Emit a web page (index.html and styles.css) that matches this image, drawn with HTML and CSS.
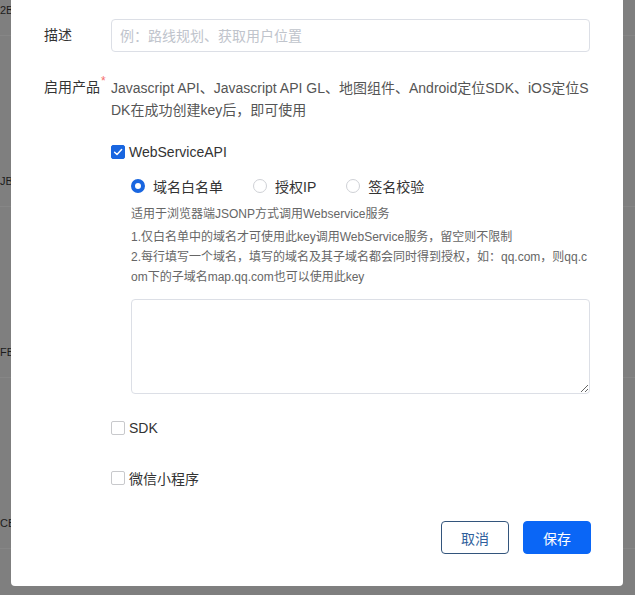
FILE: index.html
```html
<!DOCTYPE html>
<html lang="zh-CN">
<head>
<meta charset="utf-8">
<title>创建Key</title>
<link rel="stylesheet" href="styles.css">
</head>
<body>
<div class="backdrop">
  <div class="bg-row"><div class="bg-cell">2B</div><div class="bg-line"></div></div>
  <div class="bg-row"><div class="bg-cell">JB</div><div class="bg-line"></div></div>
  <div class="bg-row"><div class="bg-cell">FB</div><div class="bg-line"></div></div>
  <div class="bg-row"><div class="bg-cell">CB</div><div class="bg-line"></div></div>
</div>

<div class="modal">
  <div class="form">
    <div class="form-item item-desc">
      <label class="label">描述</label>
      <div class="control">
        <input class="input" type="text" placeholder="例：路线规划、获取用户位置">
      </div>
    </div>

    <div class="form-item item-products">
      <div class="label">启用产品<span class="req">*</span></div>
      <div class="control">
        <p class="intro">Javascript API、Javascript API GL、地图组件、Android定位SDK、iOS定位SDK在成功创建key后，即可使用</p>

        <div class="product">
          <label class="check">
            <span class="box checked">
              <svg viewBox="0 0 14 14" width="14" height="14"><path d="M3.6 7.2 L6 9.5 L10.6 4.6" fill="none" stroke="#fff" stroke-width="1.5" stroke-linecap="round" stroke-linejoin="round"/></svg>
            </span>
            <span class="check-text">WebServiceAPI</span>
          </label>
          <div class="sub">
            <div class="radios">
              <label class="radio"><span class="dot on"></span><span>域名白名单</span></label>
              <label class="radio"><span class="dot"></span><span>授权IP</span></label>
              <label class="radio"><span class="dot"></span><span>签名校验</span></label>
            </div>
            <div class="help">
              <p class="help-first">适用于浏览器端JSONP方式调用Webservice服务</p>
              <p>1.仅白名单中的域名才可使用此key调用WebService服务，留空则不限制</p>
              <p>2.每行填写一个域名，填写的域名及其子域名都会同时得到授权，如：qq.com，则qq.com下的子域名map.qq.com也可以使用此key</p>
            </div>
            <textarea class="textarea"></textarea>
          </div>
        </div>

        <div class="product product-sdk">
          <label class="check"><span class="box"></span><span class="check-text">SDK</span></label>
        </div>

        <div class="product product-mini">
          <label class="check"><span class="box"></span><span class="check-text">微信小程序</span></label>
        </div>
      </div>
    </div>
  </div>

  <div class="footer">
    <button class="btn btn-cancel" type="button">取消</button>
    <button class="btn btn-primary" type="button">保存</button>
  </div>
</div>
</body>
</html>
```

FILE: styles.css
```css
* { box-sizing: border-box; }

html, body {
  margin: 0;
  padding: 0;
  width: 635px;
  height: 595px;
  overflow: hidden;
}

body {
  position: relative;
  background: #7f7f7f;
  font-family: "Liberation Sans", "Noto Sans CJK SC", sans-serif;
  color: #333;
}

/* dimmed page behind the dialog */
.backdrop {
  height: 595px;
  overflow: hidden;
  display: flex;
  flex-direction: column;
}

.bg-row {
  height: 171px;
  flex: none;
}

.bg-cell {
  height: 20px;
  line-height: 20px;
  font-size: 11px;
  color: #1c1c1c;
  white-space: nowrap;
}

.bg-line {
  margin-top: 15px;
  height: 1px;
  background: #868686;
}

/* dialog */
.modal {
  position: absolute;
  left: 11px;
  top: 0;
  width: 612px;
  height: 586px;
  background: #fff;
  border-radius: 0 0 4px 4px;
  padding: 19px 33px 0 33px;
  display: flex;
  flex-direction: column;
}

.form-item {
  display: flex;
  align-items: flex-start;
}

.label {
  width: 67px;
  flex: none;
  font-size: 14px;
  color: #333;
}

.control {
  flex: 1;
  min-width: 0;
}

.item-desc .label {
  line-height: 33px;
}

.input {
  display: block;
  width: 100%;
  height: 33px;
  border: 1px solid #dcdfe6;
  border-radius: 4px;
  padding: 0 8px;
  font-family: inherit;
  font-size: 14px;
  color: #333;
  outline: none;
}

.input::placeholder {
  color: #c0c4cc;
}

.item-products {
  margin-top: 25px;
}

.item-products .label {
  line-height: 20px;
}

.req {
  color: #f56c6c;
  font-size: 12px;
  vertical-align: top;
  position: relative;
  top: -6px;
  margin-left: 1px;
}

.intro {
  margin: 0 -6px 0 0;
  font-size: 14px;
  line-height: 22px;
  color: #555;
  word-break: break-all;
}

.product {
  margin-top: 21px;
}

.product-sdk {
  margin-top: 24px;
}

.product-mini {
  margin-top: 30px;
}

.check {
  display: flex;
  align-items: center;
  gap: 4px;
  height: 20px;
  font-size: 14px;
  color: #333;
}

.box {
  width: 14px;
  height: 14px;
  border: 1px solid #c8c9cc;
  border-radius: 2px;
  background: #fff;
  display: flex;
  align-items: center;
  justify-content: center;
}

.box.checked {
  background: #1966e0;
  border-color: #1966e0;
}

.box svg {
  display: block;
  flex: none;
}

.sub {
  padding-left: 20px;
}

.radios {
  margin-top: 14px;
  display: flex;
  align-items: center;
  gap: 30px;
  height: 20px;
}

.radio {
  display: flex;
  align-items: center;
  gap: 8px;
  font-size: 14px;
  color: #333;
}

.dot {
  width: 14px;
  height: 14px;
  border-radius: 50%;
  border: 1px solid #cfd1d6;
  background: #fff;
}

.dot.on {
  border: 4px solid #1966e0;
}

.help {
  margin-top: 8px;
  font-size: 12px;
  line-height: 20px;
  color: #666;
}

.help p {
  margin: 0;
  word-break: break-all;
}

.help .help-first {
  margin-bottom: 3px;
}

.textarea {
  display: block;
  margin-top: 12px;
  width: 100%;
  height: 95px;
  border: 1px solid #dcdfe6;
  border-radius: 4px;
  font-family: inherit;
  font-size: 14px;
  outline: none;
}

.footer {
  margin-top: 33px;
  margin-right: -1px;
  display: flex;
  justify-content: flex-end;
  gap: 14px;
}

.btn {
  width: 68px;
  height: 33px;
  border-radius: 4px;
  font-family: inherit;
  font-size: 14px;
  cursor: pointer;
}

.btn-cancel {
  background: #fff;
  border: 1px solid #33557c;
  color: #2f5f9c;
}

.btn-primary {
  background: #0a66f6;
  border: 1px solid #0a66f6;
  color: #fff;
}
```
